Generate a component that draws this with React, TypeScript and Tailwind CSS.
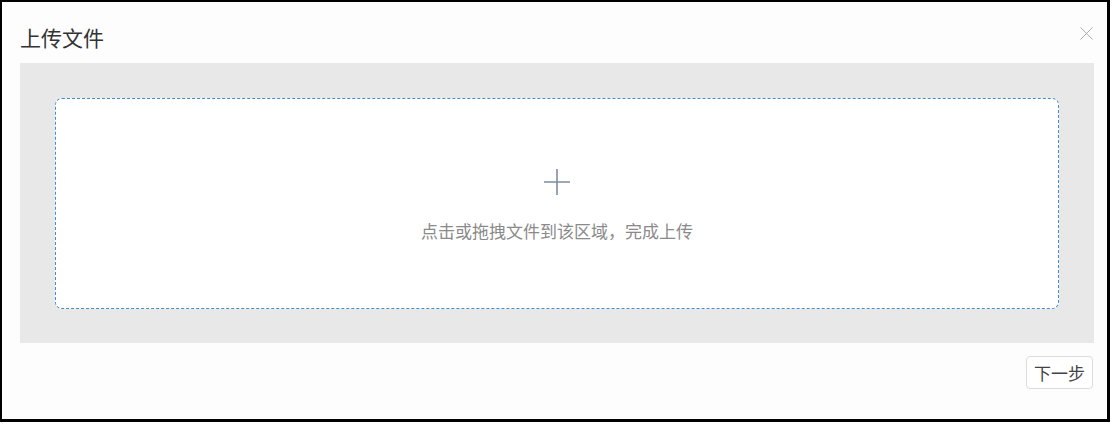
import { X } from 'lucide-react';

export default function App() {
  return (
    <div className="w-[1112px] h-[424px] bg-white" style={{ fontFamily: '"Noto Sans CJK SC", "Noto Sans", sans-serif' }}>
      <div className="w-[1110px] h-[422px] border-l-2 border-t-2 border-r-[3px] border-b-[3px] border-black bg-[#fdfdfd] flex flex-col pl-[18px] pr-[13px]">
        {/* Header */}
        <div className="h-[61px] flex items-center justify-between pt-[10px]">
          <h2 className="text-[21px] leading-none text-[#333333]">上传文件</h2>
          <button className="text-[#a0a0a0] -mt-[8px] -mr-[4px]">
            <X size={23} strokeWidth={0.9} />
          </button>
        </div>

        {/* Upload area */}
        <div className="h-[280px] bg-[#e8e8e8] p-[35px] pb-[34px]">
          <div className="h-full rounded-[7px] border-[1.5px] border-dashed border-[#3f8fcf] bg-white flex flex-col items-center justify-center">
            <svg width="28" height="28" viewBox="0 0 28 28">
              <path d="M14 1v26M1 14h26" stroke="#7f8ca3" strokeWidth="1.6" fill="none" />
            </svg>
            <p className="mt-[26px] text-[17px] leading-none text-[#8a8a8a]">点击或拖拽文件到该区域，完成上传</p>
          </div>
        </div>

        {/* Footer */}
        <div className="flex justify-end pt-[13px]">
          <button className="h-[33px] px-[7px] border border-[#dcdcdc] rounded-[4px] bg-white text-[17px] leading-none text-[#444444] mr-[1px]">
            下一步
          </button>
        </div>
      </div>
    </div>
  );
}
